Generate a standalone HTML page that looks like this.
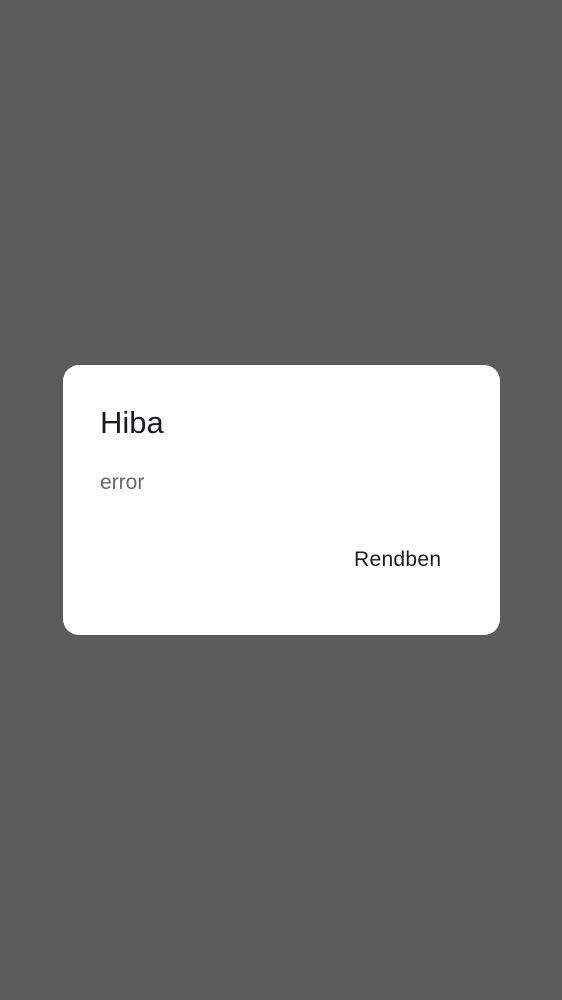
<!DOCTYPE html>
<html><head><meta charset="utf-8"><style>
html,body{margin:0;padding:0;width:562px;height:1000px;background:#5c5c5c;overflow:hidden;font-family:"Liberation Sans",sans-serif;}
.d{position:absolute;left:63px;top:365px;width:437px;height:270px;background:#fff;border-radius:16px;}
.t{position:absolute;left:37px;top:40px;font-size:31px;color:#1c1c1f;}
.m{position:absolute;left:37px;top:106px;font-size:21px;color:#646a73;}
.b{position:absolute;left:291px;top:183px;font-size:21px;color:#1c1c1f;letter-spacing:0.3px;}
</style></head><body>
<div class="d"><div class="t">Hiba</div><div class="m">error</div><div class="b">Rendben</div></div>
</body></html>
